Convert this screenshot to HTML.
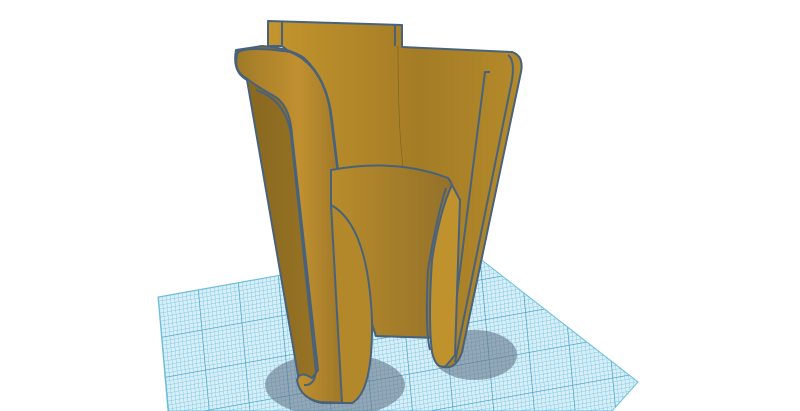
<!DOCTYPE html>
<html><head><style>html,body{margin:0;padding:0;background:#fff;width:800px;height:411px;overflow:hidden}</style></head>
<body>
<svg width="800" height="411" viewBox="0 0 800 411" xmlns="http://www.w3.org/2000/svg">
<defs>
<pattern id="minor" width="4" height="4" patternUnits="userSpaceOnUse" patternTransform="matrix(1,-0.18,0.09,1,158,297)">
<path d="M0 0H4M0 0V4" stroke="#7cc6e2" stroke-width="0.9" fill="none"/>
</pattern>
<pattern id="major" width="40" height="40" patternUnits="userSpaceOnUse" patternTransform="matrix(1,-0.18,0.09,1,158,297)">
<path d="M0 0H40M0 0V40" stroke="#3f9fc6" stroke-width="1.3" fill="none"/>
</pattern>
<linearGradient id="back" x1="0" x2="1" y1="0" y2="0">
<stop offset="0" stop-color="#c4952d"/><stop offset="0.6" stop-color="#a47c26"/><stop offset="1" stop-color="#b48a2a"/>
</linearGradient>
<linearGradient id="left" x1="0" x2="1">
<stop offset="0" stop-color="#86661f"/><stop offset="1" stop-color="#a07a27"/>
</linearGradient>
<linearGradient id="tube" x1="0" x2="1">
<stop offset="0" stop-color="#a07a27"/><stop offset="0.5" stop-color="#c19030"/><stop offset="1" stop-color="#8e6c24"/>
</linearGradient>
<linearGradient id="cup" x1="0" x2="1">
<stop offset="0" stop-color="#b88c2b"/><stop offset="1" stop-color="#94712a"/>
</linearGradient>
</defs>
<polygon points="158,297 460,243 638,382 612,411 168,411" fill="#d8eff8"/>
<polygon points="158,297 460,243 638,382 612,411 168,411" fill="url(#minor)"/>
<polygon points="158,297 460,243 638,382 612,411 168,411" fill="url(#major)"/>
<polygon points="158,297 460,243 638,382 612,411 168,411" fill="none" stroke="#6cc0dd" stroke-width="1"/>
<ellipse cx="335" cy="385" rx="70" ry="32" fill="#66778a" opacity="0.6"/>
<ellipse cx="475" cy="355" rx="42" ry="25" fill="#66778a" opacity="0.6"/>
<g stroke="#48627c" stroke-width="2" stroke-linejoin="round">
<path d="M268,21 L402,25 L402,47 L512,52 Q524,56 521,72 L462,352 Q455,372 440,366 L440,338 L376,336 L331,205 L300,60 L282,46 L268,46 Z" fill="url(#back)"/>
<path d="M282,22 L282,45 M395,25 L395,46" fill="none"/>
<path d="M398,46 Q398,140 405,180" fill="none" stroke-width="0.6" stroke="#7a6020"/>
<path d="M508,55 Q515,60 512,80 L455,362" fill="none"/>
<path d="M490,72 L485,72 L455,310" fill="none"/>
<path d="M236,50 Q232,72 247,80 L298,375 Q300,400 322,403 L352,403 Q364,395 362,370 L332,120 Q328,80 304,58 Q290,48 262,46 Z" fill="url(#left)"/>
<path d="M238,52 Q250,46 290,52 Q322,65 330,110 L362,370 Q362,398 345,403 L320,402 Q300,398 297,380 Q300,370 312,378 L318,370 L292,135 Q290,105 274,96 Q256,86 246,78 Q232,70 238,52 Z" fill="url(#tube)"/>
<path d="M256,90 Q286,100 291,135 L316,372 Q314,386 304,385" fill="none"/>
<path d="M331,170 Q395,158 448,178 Q456,186 450,205 L440,338 L376,336 L331,205 Z" fill="url(#cup)"/>
<path d="M331,205 Q368,225 372,320 Q373,392 352,403 L342,403 Z" fill="#b3882a"/>
<path d="M452,185 Q440,210 432,260 Q428,320 432,352 Q436,370 446,366 L455,355 L460,200 Z" fill="#bf922e"/>
<path d="M446,188 Q436,220 428,270 Q425,330 430,350" fill="none"/>
</g>
</svg>
</body></html>
